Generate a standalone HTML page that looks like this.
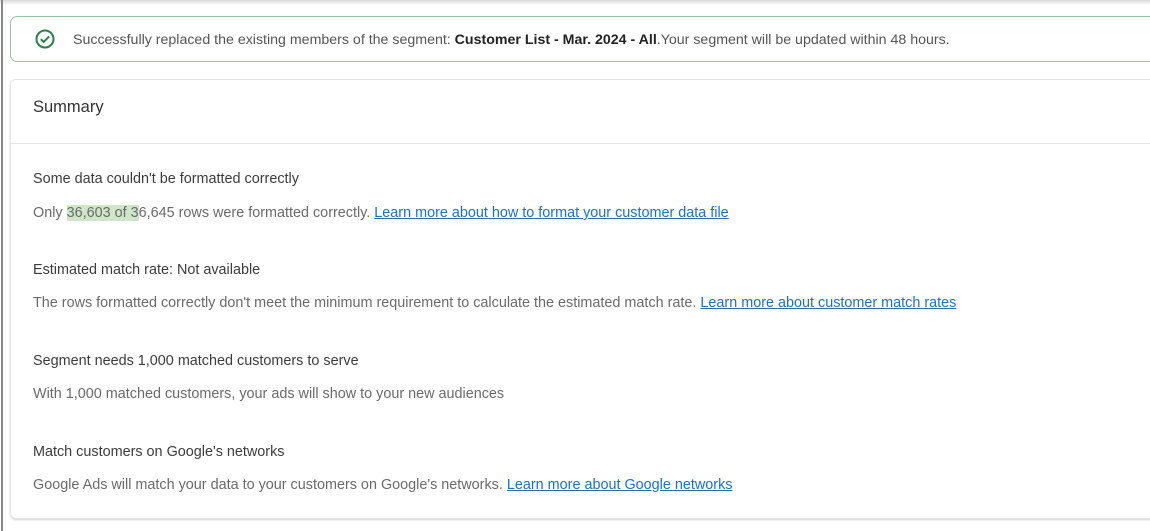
<!DOCTYPE html>
<html><head><meta charset="utf-8"><style>
html,body{margin:0;padding:0;width:1150px;height:531px;overflow:hidden;background:#fff;font-family:"Liberation Sans",Arial,sans-serif;}
.shadow{position:absolute;left:0;top:0;width:1150px;height:5px;background:linear-gradient(#d8d8d8,#fff);}
.edge{position:absolute;left:1px;top:0;width:2px;height:531px;background:#888;}
.banner{position:absolute;left:10px;top:16px;width:1160px;height:46px;border:1px solid #9cc3a4;border-radius:7px;box-sizing:border-box;}
.banner svg{position:absolute;left:24px;top:12px;}
.banner .t{position:absolute;left:62px;top:15px;font-size:14.2px;color:#555;white-space:nowrap;}
.banner b{color:#222;}
.card{position:absolute;left:10px;top:79px;width:1160px;height:440px;border:1px solid #e6e6e6;border-radius:6px;box-shadow:0 1px 2px rgba(0,0,0,.18);box-sizing:border-box;}
.div{position:absolute;left:0;right:0;top:63px;height:1px;background:#e4e4e4;}
.p{position:absolute;left:22px;white-space:nowrap;font-size:14.4px;}
.h{color:#3c3c3c;}
.b{color:#6a6a6a;}
a{color:#1a6fd6;text-decoration:underline;}
.hl{background:#cfe6c8;}
</style></head><body>
<div class="shadow"></div><div class="edge"></div>
<div class="banner">
<svg width="20" height="20" viewBox="0 0 20 20"><circle cx="10" cy="10" r="8.5" fill="none" stroke="#2e7d4a" stroke-width="2"/><path d="M5.8 10.2l2.8 2.8 5.6-5.6" fill="none" stroke="#2e7d4a" stroke-width="2"/></svg>
<div class="t">Successfully replaced the existing members of the segment: <b>Customer List - Mar. 2024 - All</b>.Your segment will be updated within 48 hours.</div>
</div>
<div class="card">
<div class="p" style="top:18px;font-size:16.5px;color:#333;">Summary</div>
<div class="div"></div>
<div class="p h" style="top:91px;">Some data couldn't be formatted correctly</div>
<div class="p b" style="top:125px;">Only <span class="hl">36,603 of 3</span>6,645 rows were formatted correctly. <a>Learn more about how to format your customer data file</a></div>
<div class="p h" style="top:182px;">Estimated match rate: Not available</div>
<div class="p b" style="top:215px;">The rows formatted correctly don't meet the minimum requirement to calculate the estimated match rate. <a>Learn more about customer match rates</a></div>
<div class="p h" style="top:273px;">Segment needs 1,000 matched customers to serve</div>
<div class="p b" style="top:306px;">With 1,000 matched customers, your ads will show to your new audiences</div>
<div class="p h" style="top:364px;">Match customers on Google's networks</div>
<div class="p b" style="top:397px;">Google Ads will match your data to your customers on Google's networks. <a>Learn more about Google networks</a></div>
</div>
</body></html>
